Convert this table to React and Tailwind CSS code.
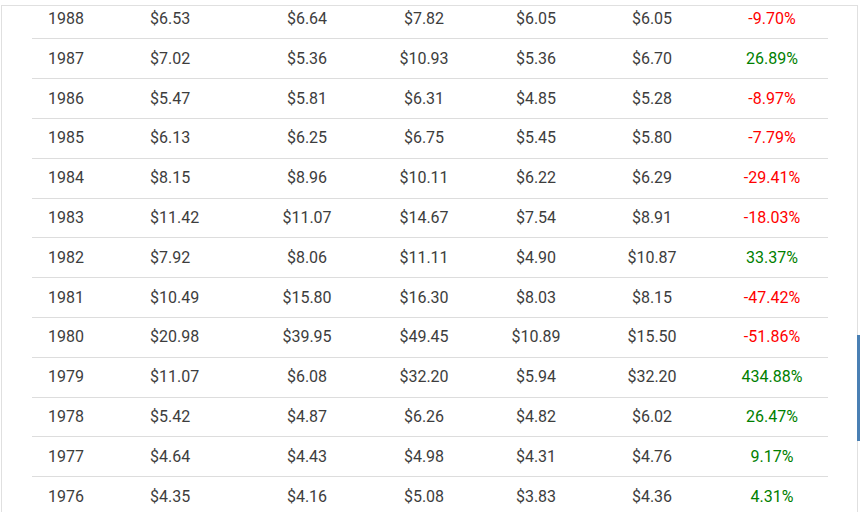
import React from 'react';

const rows = [
  ['1988', '$6.53', '$6.64', '$7.82', '$6.05', '$6.05', '-9.70%'],
  ['1987', '$7.02', '$5.36', '$10.93', '$5.36', '$6.70', '26.89%'],
  ['1986', '$5.47', '$5.81', '$6.31', '$4.85', '$5.28', '-8.97%'],
  ['1985', '$6.13', '$6.25', '$6.75', '$5.45', '$5.80', '-7.79%'],
  ['1984', '$8.15', '$8.96', '$10.11', '$6.22', '$6.29', '-29.41%'],
  ['1983', '$11.42', '$11.07', '$14.67', '$7.54', '$8.91', '-18.03%'],
  ['1982', '$7.92', '$8.06', '$11.11', '$4.90', '$10.87', '33.37%'],
  ['1981', '$10.49', '$15.80', '$16.30', '$8.03', '$8.15', '-47.42%'],
  ['1980', '$20.98', '$39.95', '$49.45', '$10.89', '$15.50', '-51.86%'],
  ['1979', '$11.07', '$6.08', '$32.20', '$5.94', '$32.20', '434.88%'],
  ['1978', '$5.42', '$4.87', '$6.26', '$4.82', '$6.02', '26.47%'],
  ['1977', '$4.64', '$4.43', '$4.98', '$4.31', '$4.76', '9.17%'],
  ['1976', '$4.35', '$4.16', '$5.08', '$3.83', '$4.36', '4.31%'],
];

const App = () => {
  return (
    <div className="h-[512px] w-[860px] overflow-hidden bg-white" style={{ fontFamily: 'Roboto, "Liberation Sans", sans-serif' }}>
      <div className="relative mt-[5px] ml-[1px] h-[507px] w-[857px] border-t border-l border-r border-[#e0e0e0]">
        {/* scrollbar thumb */}
        <div className="absolute right-[-3px] top-[329px] h-[106px] w-[3px] bg-[#4a80b4]"></div>

        <div className="ml-[30px] mt-[-6.4px] w-[796px] text-base text-[#3d3d3d]">
          {rows.map((r) => {
            const up = !r[6].startsWith('-');
            return (
              <div key={r[0]} className="grid h-[39.8px] grid-cols-[102px_116px_114px_120px_104px_128px_112px] items-center border-b border-[#dddddd]">
                <div className="pl-4">{r[0]}</div>
                <div className="pl-4">{r[1]}</div>
                <div className="text-center">{r[2]}</div>
                <div className="text-center">{r[3]}</div>
                <div className="text-center">{r[4]}</div>
                <div className="text-center">{r[5]}</div>
                <div className={up ? 'text-center text-[#008000]' : 'text-center text-[#ff0000]'}>{r[6]}</div>
              </div>
            );
          })}
        </div>
      </div>
    </div>
  );
};

export default App;
